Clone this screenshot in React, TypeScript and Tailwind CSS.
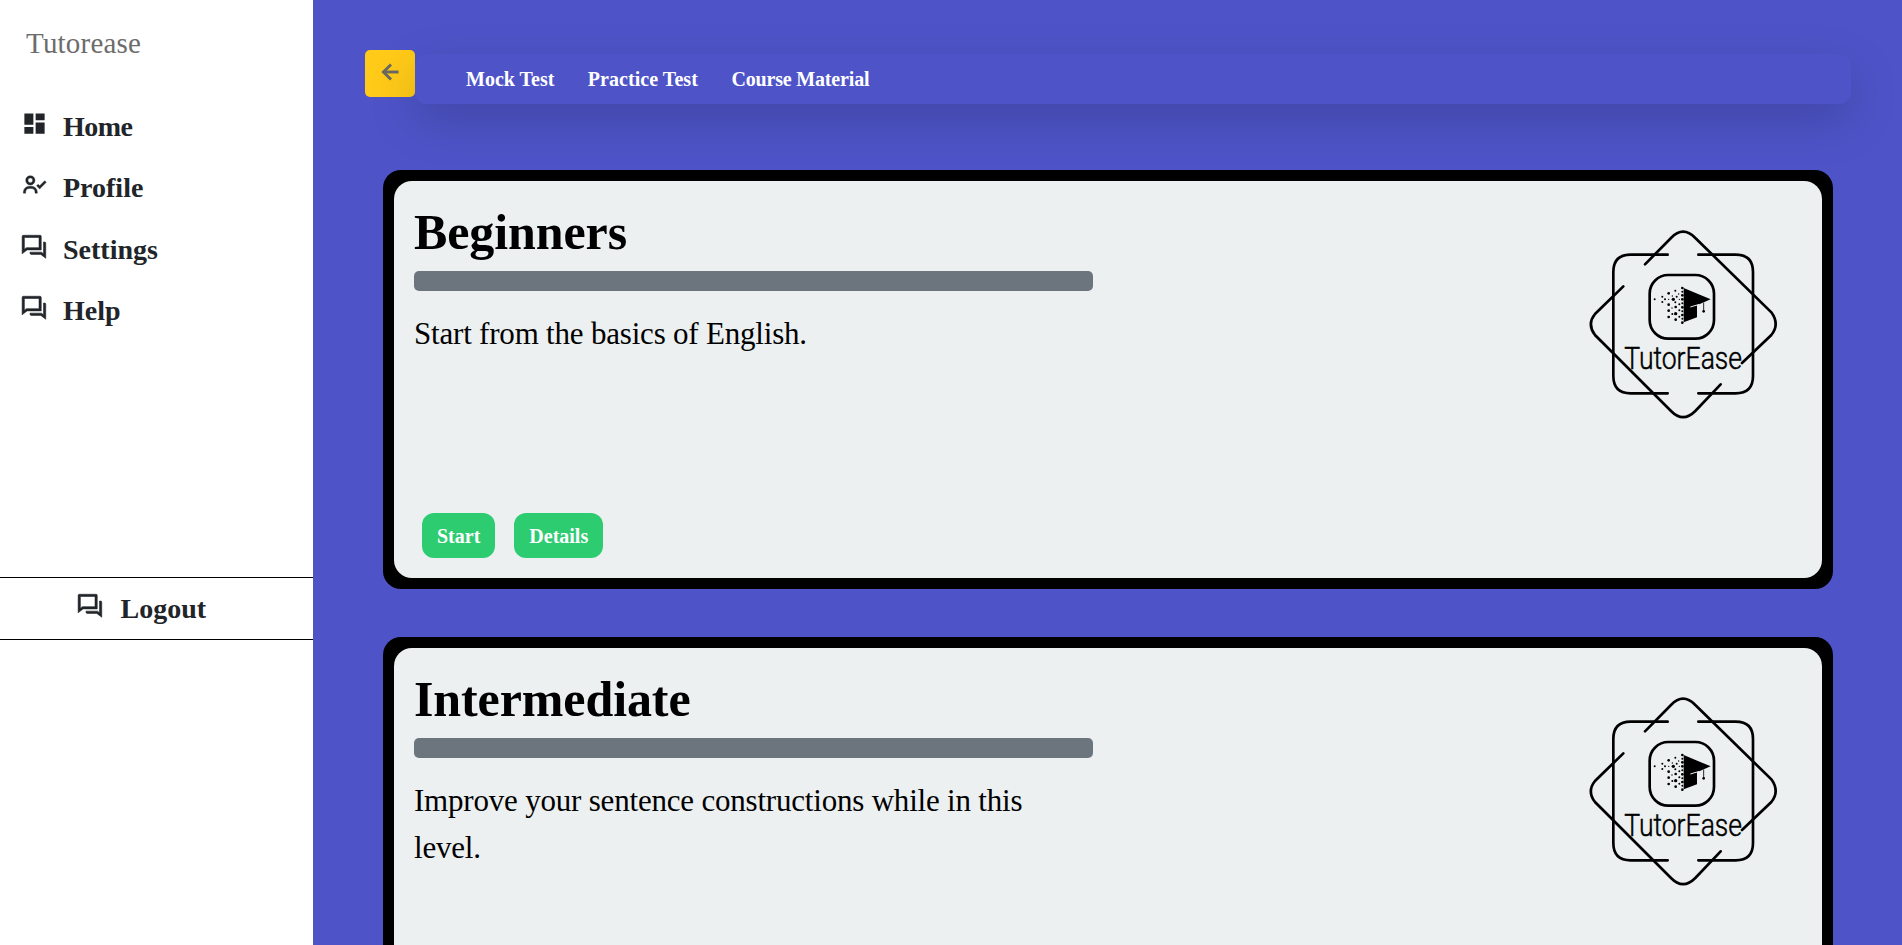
import React from "react";
import { ArrowLeft } from "lucide-react";
import { MdDashboard } from "react-icons/md";
import { RiQuestionAnswerLine } from "react-icons/ri";
import { BiUserCheck } from "react-icons/bi";

const menu = [
  { label: "Home", Icon: MdDashboard, size: 27, look: "", spacing: "tracking-[-0.5px]" },
  { label: "Profile", Icon: BiUserCheck, size: 28, look: "stroke-current stroke-[0.3px]", spacing: "tracking-normal" },
  { label: "Settings", Icon: RiQuestionAnswerLine, size: 27, look: "stroke-current stroke-[0.5px]", spacing: "tracking-normal" },
  { label: "Help", Icon: RiQuestionAnswerLine, size: 27, look: "stroke-current stroke-[0.5px]", spacing: "tracking-normal" },
];

const courses = [
  { title: "Beginners", text: "Start from the basics of English.", actions: ["Start", "Details"] },
  { title: "Intermediate", text: "Improve your sentence constructions while in this level.", actions: [] },
];

const dots = [
  [254, 268, 3], [277, 260, 3], [277, 276, 3], [285, 268, 3], [296, 250, 4], [296, 268, 2], [296, 284, 4],
  [296, 302, 4], [296, 321, 4], [307, 258, 2], [310, 268, 5], [306, 294, 2], [307, 312, 3], [316, 242, 3],
  [316, 277, 3], [317, 291, 4], [317, 311, 5], [317, 329, 4], [320, 260, 3], [326, 252, 2], [328, 283, 3],
  [328, 301, 3], [328, 320, 3], [328, 268, 2], [337, 234, 4], [337, 245, 3], [337, 256, 4], [337, 268, 4],
  [337, 280, 3], [337, 292, 4], [337, 304, 3], [337, 315, 4], [337, 326, 3], [337, 338, 4],
];

function Logo() {
  return (
    <svg viewBox="0 0 690 690" className="mt-[29px] mr-[22px] h-[230px] w-[230px] shrink-0">
      <g fill="none" stroke="#000" strokeWidth="8" strokeLinecap="round">
        <path d="M293 134H182Q130 134 130 186V498Q130 550 182 550H293" />
        <path d="M385 134H497Q549 134 549 186V498Q549 550 497 550H385" />
        <path d="M225 163L303 84Q339 46 376 84L604 307Q630 343 604 375L516 459" />
        <path d="M160 229L75 312Q50 343 75 375L303 603Q339 640 376 603L452 523" />
        <rect x="239" y="195" width="193" height="191" rx="56" />
      </g>
      <path d="M341 234L422 268L381 286V322L341 337Z" />
      <path d="M361 291L388 283" stroke="#ecf0f1" strokeWidth="3" />
      <path d="M401 278V302" stroke="#000" strokeWidth="2.5" />
      <circle cx="401" cy="304" r="4" />
      {dots.map(([x, y, r]) => (
        <circle key={`${x}-${y}`} cx={x} cy={y} r={r} />
      ))}
      <text
        x="163"
        y="477"
        fontSize="93"
        textLength="353"
        lengthAdjust="spacingAndGlyphs"
        stroke="#000"
        strokeWidth="1.5"
        className="font-['Roboto',sans-serif] font-light"
      >
        TutorEase
      </text>
    </svg>
  );
}

function CourseCard({ title, text, actions }: { title: string; text: string; actions: string[] }) {
  return (
    <section className="h-[419px] shrink-0 rounded-[18px] bg-black p-[11px]">
      <div className="flex h-full justify-between rounded-[18px] bg-[#ecf0f1] text-black">
        <div className="flex w-[699px] flex-col pt-[21px] pb-[20px] pl-[20px]">
          <h2 className="text-[50px] leading-[60px] font-bold tracking-[-0.1px]">{title}</h2>
          <div className="mt-[9px] h-[20px] rounded-[5px] bg-[#6c757d]" />
          <p className="mt-[19px] text-[31px] leading-[47px] tracking-[-0.2px]">{text}</p>
          <div className="mt-auto ml-[8px] flex gap-[19px] text-[20px] font-bold text-white">
            {actions.map((a) => (
              <button key={a} className="h-[45px] rounded-[12px] bg-[#2ecc71] px-[15px]">
                {a}
              </button>
            ))}
          </div>
        </div>
        <Logo />
      </div>
    </section>
  );
}

export default function App() {
  return (
    <div className="flex h-screen overflow-hidden bg-[#4e54c8] font-['Liberation_Serif','Times_New_Roman',serif]">
      <aside className="w-[313px] shrink-0 bg-white text-[#212529]">
        <div className="pt-[22px] pl-[26px] text-[29px] leading-[43px] tracking-[0.2px] text-[#6c6c6c]">Tutorease</div>
        <nav className="mt-[31px]">
          {menu.map(({ label, Icon, size, look, spacing }) => (
            <a key={label} className="flex h-[61.5px] items-center pl-[20.5px]">
              <span className="mb-[7px] flex w-[28px]">
                <Icon size={size} className={look} />
              </span>
              <span className={`ml-[14.5px] text-[28px] leading-[42px] font-bold ${spacing}`}>{label}</span>
            </a>
          ))}
        </nav>
        <a className="mt-[235px] flex h-[63px] items-center border-y border-black pl-[76.5px]">
          <RiQuestionAnswerLine size={27} className="mb-[7px] stroke-current stroke-[0.5px]" />
          <span className="ml-[17px] text-[28px] leading-[42px] font-bold">Logout</span>
        </a>
      </aside>
      <main className="flex-1 pt-[50px] pr-[51px] pl-[52px]">
        <header className="flex h-[54px]">
          <button className="flex h-[47px] w-[50px] items-center justify-center rounded-[5px] bg-[#ffca18] pb-[3px] pl-px text-[#6a6a60]">
            <ArrowLeft size={26} strokeWidth={2.7} strokeLinecap="butt" strokeLinejoin="miter" />
          </button>
          <nav className="mt-[4px] flex h-[50px] flex-1 items-center gap-[33.5px] rounded-[12px] bg-[#4e54c8] pb-px pl-[51px] text-[20px] font-bold text-white shadow-[0_16px_48px_rgba(0,0,0,0.175)]">
            <a>Mock Test</a>
            <a className="tracking-[0.05px]">Practice Test</a>
            <a className="tracking-[-0.17px]">Course Material</a>
          </nav>
        </header>
        <div className="mt-[66px] mr-[18px] ml-[18px] flex flex-col gap-[48px]">
          {courses.map((c) => (
            <CourseCard key={c.title} {...c} />
          ))}
        </div>
      </main>
    </div>
  );
}
